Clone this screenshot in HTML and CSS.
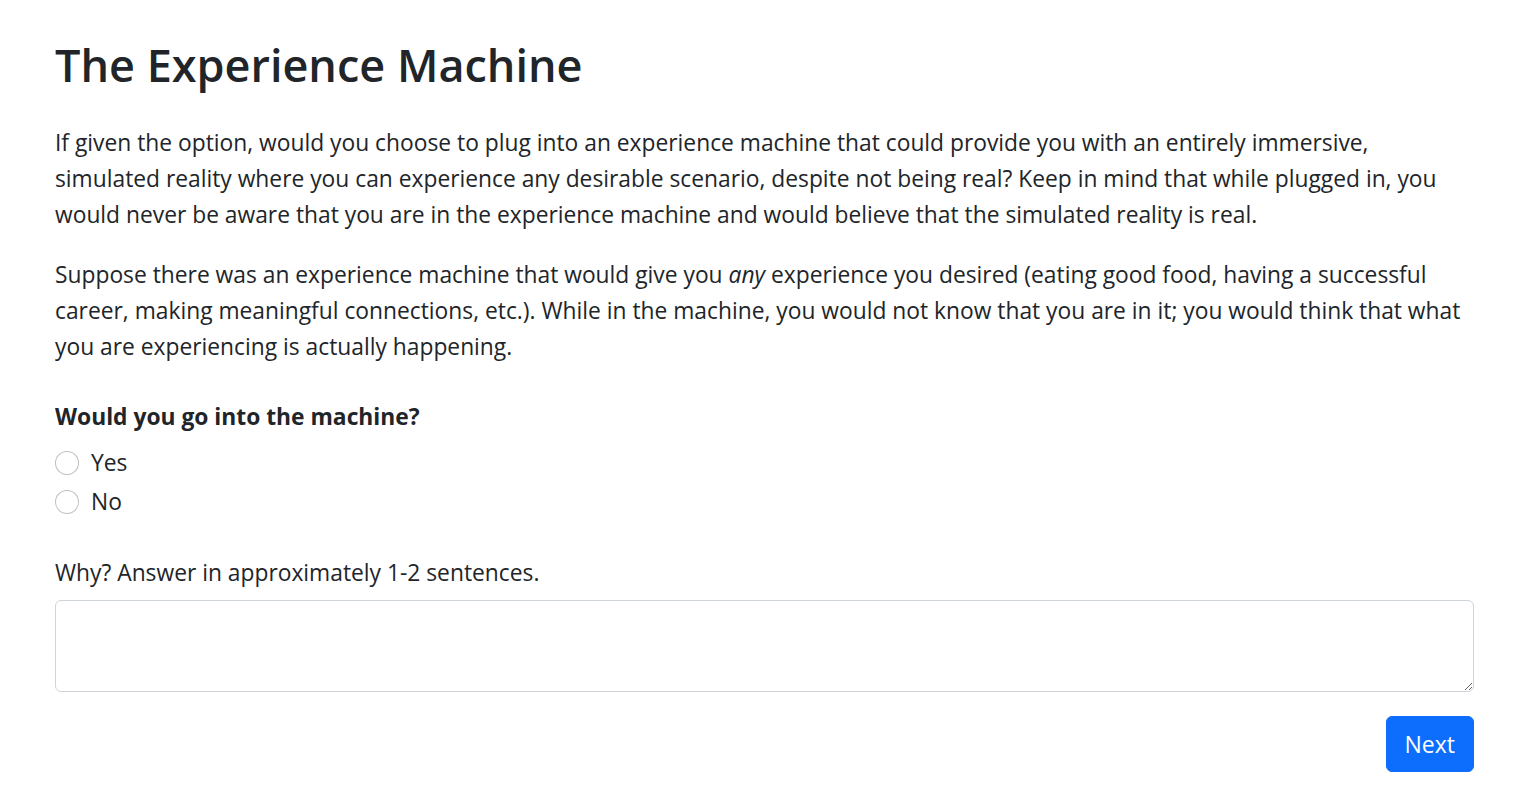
FILE: index.html
```html
<!DOCTYPE html>
<html lang="en">
<head>
<meta charset="utf-8">
<title>The Experience Machine</title>
<link rel="stylesheet" href="styles.css">
</head>
<body>
<main class="page">
  <h1 class="title">The Experience Machine</h1>
  <p class="text">If given the option, would you choose to plug into an experience machine that could provide you with an entirely immersive, simulated reality where you can experience any desirable scenario, despite not being real? Keep in mind that while plugged in, you would never be aware that you are in the experience machine and would believe that the simulated reality is real.</p>
  <p class="text">Suppose there was an experience machine that would give you <em>any</em> experience you desired (eating good food, having a successful career, making meaningful connections, etc.). While in the machine, you would not know that you are in it; you would think that what you are experiencing is actually happening.</p>
  <form class="form">
    <div class="question">Would you go into the machine?</div>
    <label class="check"><input type="radio" name="go" class="radio"><span>Yes</span></label>
    <label class="check"><input type="radio" name="go" class="radio"><span>No</span></label>
    <label class="why" for="why">Why? Answer in approximately 1-2 sentences.</label>
    <textarea id="why" class="area" rows="2"></textarea>
    <div class="actions"><button type="button" class="btn">Next</button></div>
  </form>
</main>
</body>
</html>
```
FILE: styles.css
```css
* { box-sizing: border-box; }
html, body { margin: 0; padding: 0; background: #fff; }
body {
  font-family: "Open Sans", "Noto Sans", sans-serif;
  color: #212529;
  font-size: 22.8px;
  line-height: 36px;
}
.page {
  width: 1419px;
  margin-left: 55px;
  padding-top: 35px;
}
.title {
  font-size: 45px;
  font-weight: 600;
  line-height: 60px;
  margin: 0 0 30px 0;
}
.text { margin: 0 0 24px 0; }
.form { display: flex; flex-direction: column; }
.question { font-weight: 700; margin-top: 10px; margin-bottom: 10px; }
.check { display: flex; align-items: center; gap: 12px; height: 36px; margin-bottom: 3px; }
.radio {
  appearance: none; -webkit-appearance: none;
  width: 24px; height: 24px; margin: 0;
  border: 1px solid rgba(0,0,0,.25); border-radius: 50%; background: #fff;
}
.why { margin-top: 32px; margin-bottom: 9px; }
.area {
  display: block; width: 100%; height: 92px;
  border: 1px solid #ced4da; border-radius: 6px;
  font: inherit; padding: 9px 18px; resize: vertical;
}
.actions { display: flex; justify-content: flex-end; margin-top: 24px; }
.btn {
  font: inherit; font-size: 23px; line-height: 36px;
  background: #0d6efd; color: #fff; border: 1px solid #0d6efd;
  border-radius: 6px; padding: 9px 18px; height: 56px;
}
```
